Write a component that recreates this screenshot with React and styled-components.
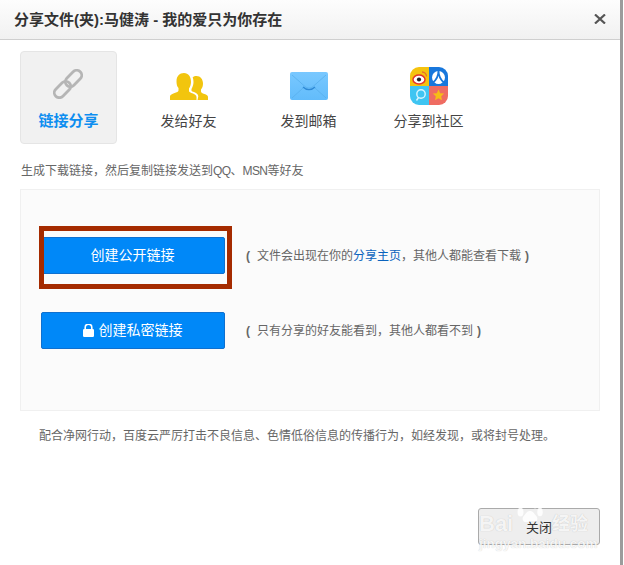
import React from "react";
import styled, { createGlobalStyle } from "styled-components";

const Global = createGlobalStyle`
  html, body { margin: 0; padding: 0; background: #fff; }
  body { font-family: "Liberation Sans", "Noto Sans CJK SC", sans-serif; }
`;

const Page = styled.div`
  position: relative;
  width: 624px;
  height: 565px;
  overflow: hidden;
  background: #fff;
`;
const Dialog = styled.div`
  box-sizing: border-box;
  width: 623px;
  height: 565px;
  border-right: 3px solid #9c9c9c;
  display: flex;
  flex-direction: column;
`;
const Header = styled.header`
  box-sizing: border-box;
  height: 40px;
  flex: none;
  display: flex;
  align-items: center;
  justify-content: space-between;
  padding: 0 14px;
  background: linear-gradient(#fdfdfd, #f1f1f1);
  border-bottom: 1px solid #cfcfcf;
`;
const Title = styled.h1`
  margin: 0;
  font-size: 15px;
  font-weight: 700;
  color: #333;
  line-height: 38px;
`;
const Close = styled.svg`
  width: 12px;
  height: 10px;
  margin-top: -1px;
`;
const Tabs = styled.nav`
  display: flex;
  gap: 23px;
  padding: 11px 0 0 20px;
`;
const Tab = styled.div`
  box-sizing: border-box;
  width: 97px;
  height: 93px;
  display: flex;
  flex-direction: column;
  align-items: center;
  padding-top: 15px;
  border: 1px solid ${(p) => (p.$active ? "#e5e5e5" : "transparent")};
  border-radius: 4px;
  background: ${(p) => (p.$active ? "#f1f1f1" : "transparent")};
`;
const IconSlot = styled.div`
  height: 38px;
  display: flex;
  align-items: center;
  justify-content: center;
`;
const TabLabel = styled.div`
  margin-top: 6px;
  font-size: ${(p) => (p.$active ? "15px" : "14px")};
  line-height: 20px;
  font-weight: ${(p) => (p.$active ? 700 : 400)};
  color: ${(p) => (p.$active ? "#0e8ef0" : "#444")};
  white-space: nowrap;
`;
const Desc = styled.p`
  margin: 18px 0 0 21px;
  font-size: 12px;
  line-height: 18px;
  color: #666;
`;
const Tight = styled.span`
  letter-spacing: -0.6px;
`;
const Panel = styled.section`
  box-sizing: border-box;
  width: 580px;
  height: 222px;
  margin: 9px 0 0 20px;
  padding: 47px 0 0 20px;
  background: #fbfbfb;
  border: 1px solid #f0f0f0;
  display: flex;
  flex-direction: column;
  gap: 38px;
`;
const Row = styled.div`
  display: flex;
  align-items: center;
  gap: 21px;
`;
const Button = styled.button`
  box-sizing: border-box;
  width: 184px;
  height: 37px;
  display: flex;
  align-items: center;
  justify-content: center;
  gap: 5px;
  padding: 0 1px 3px 0;
  background: #0088f8;
  border: 1px solid #0f70cf;
  border-radius: 2px;
  color: #fff;
  font: 14px "Liberation Sans", "Noto Sans CJK SC", sans-serif;
`;
const ButtonIcon = styled.svg`
  width: 11px;
  height: 13px;
  margin-top: 2px;
`;
const Hint = styled.div`
  display: flex;
  align-items: center;
  font-size: 12px;
  line-height: 18px;
  color: #666;
`;
const Paren = styled.span`
  width: ${(p) => (p.$end ? "8px" : "11px")};
  font-weight: 700;
  flex: none;
  text-align: ${(p) => (p.$end ? "right" : "left")};
`;
const Link = styled.a`
  color: #0a63bd;
`;
const Note = styled.p`
  margin: 16px 0 0 39px;
  font-size: 12px;
  line-height: 18px;
  color: #666;
`;
const Footer = styled.div`
  margin-top: auto;
  padding: 0 20px 20px 0;
  display: flex;
  justify-content: flex-end;
`;
const CloseButton = styled.button`
  box-sizing: border-box;
  width: 122px;
  height: 37px;
  padding: 0;
  background: #eee;
  border: 1px solid #aaa;
  border-radius: 3px;
  color: #333;
  font: 13px "Liberation Sans", "Noto Sans CJK SC", sans-serif;
`;
const Frame = styled.div`
  position: absolute;
  left: 39px;
  top: 226px;
  box-sizing: border-box;
  width: 193px;
  height: 63px;
  border: 5px solid #a52b00;
  pointer-events: none;
`;
const Watermark = styled.div`
  position: absolute;
  left: 478px;
  top: 497px;
  width: 115px;
  height: 54px;
  color: rgba(255, 255, 255, 0.85);
  text-shadow: 0 0 1px rgba(0, 0, 0, 0.22);
  pointer-events: none;
`;
const WmBai = styled.span`
  position: absolute;
  left: 1px;
  top: 14px;
  font-size: 22px;
  line-height: 26px;
  font-weight: 700;
`;
const WmJing = styled.span`
  position: absolute;
  left: 74px;
  top: 15px;
  font-size: 18px;
  line-height: 24px;
  font-weight: 700;
`;
const WmUrl = styled.span`
  position: absolute;
  left: 1px;
  top: 39px;
  font-size: 13.5px;
  line-height: 16px;
  font-weight: 700;
  white-space: nowrap;
`;
const WmPaw = styled.svg`
  position: absolute;
  left: 39px;
  top: 1px;
  width: 26px;
  height: 27px;
`;

const LinkIcon = () => (
  <svg width="30" height="30" viewBox="0 0 30 30" fill="none" stroke="#b5b5b5" strokeWidth="2.800" style={{ marginTop: -4, marginLeft: -2 }}>
    <rect x="11" y="4.500" width="19" height="10" rx="5" transform="rotate(-45 20.500 9.500)" />
    <rect x="0" y="15.500" width="19" height="10" rx="5" transform="rotate(-45 9.500 20.500)" />
  </svg>
);
const PeopleIcon = () => (
  <svg width="38" height="27" viewBox="0 0 38 27" fill="#f2c50e">
    <path d="M21 9c0 2.500-1 5-2 6.500v2.500c0 1 1.500 1.700 4 2.500 2 .8 3.500 2 3.500 3.500V27H0v-3.500c0-1.500 1.500-2.500 4-3.300 3-1 4.500-1.600 4.500-2.700v-2.500C7 13.500 6.500 11 6.500 8.500 6.500 3 9.500 0 14 0s7 3.500 7 9z" />
    <path d="M27.500 27h10.500v-3c0-1.500-1.500-2.300-3.500-3-2.500-.8-3.500-1.500-3.500-2.500v-2c1.300-1.500 2-3.500 2-6C33 6.500 30.500 3 26.500 3c-1.500 0-2.800.5-3.800 1.300.5 1.500.8 3 .8 4.700 0 2.700-1 5.300-2 7v1.800c0 .5 1 .9 3 1.500 2.200.8 3.800 2.200 3.800 4.200z" />
  </svg>
);
const MailIcon = () => (
  <svg width="38" height="28" viewBox="0 0 38 28" fill="none">
    <defs>
      <linearGradient id="mailBg" x1="0" y1="0" x2="0" y2="1">
        <stop offset="0" stopColor="#79c8ff" />
        <stop offset="1" stopColor="#62bcfb" />
      </linearGradient>
    </defs>
    <rect width="38" height="28" rx="2" fill="url(#mailBg)" />
    <path d="M2 3l13 11.500c2.500 2 5.500 2 8 0L36 3" stroke="#58aeec" strokeWidth="0.800" />
    <path d="M13 15c3.500 3.500 8.500 3.500 12 0" stroke="#2f8ad6" strokeWidth="1.400" />
    <path d="M2 26l11-10M36 26L25 16" stroke="#58aeec" strokeWidth="0.800" />
  </svg>
);
const CommunityIcon = () => (
  <svg width="38" height="38" viewBox="0 0 38 38">
    <defs>
      <clipPath id="tile"><rect width="38" height="38" rx="9" /></clipPath>
    </defs>
    <g clipPath="url(#tile)">
      <rect width="19" height="19" fill="#f5c30e" />
      <rect x="19" width="19" height="19" fill="#1877dc" />
      <rect y="19" width="19" height="19" fill="#3fc5f2" />
      <rect x="19" y="19" width="19" height="19" fill="#ef6c62" />
    </g>
    <ellipse cx="9" cy="12.500" rx="6" ry="4.500" fill="#fff" stroke="#e4352b" strokeWidth="1.500" />
    <circle cx="9" cy="12.500" r="2.100" fill="#222" />
    <path d="M12 5a4.500 4.500 0 0 1 4.500 4.500" stroke="#e9702a" strokeWidth="1.300" fill="none" />
    <circle cx="28.500" cy="10.500" r="6.500" fill="#fff" />
    <path d="M28.500 3.500C28.500 9 26.500 13 22.500 16M28.500 3.500C28.500 9 30.500 13 34.500 16" stroke="#1877dc" strokeWidth="1.800" fill="none" />
    <path d="M28.500 13l-2.400 3.500h4.800z" fill="#fff" />
    <circle cx="11" cy="27" r="4.200" fill="none" stroke="#d8f5ff" strokeWidth="1.400" />
    <path d="M8.500 30.500l-2 3" stroke="#d8f5ff" strokeWidth="1.400" />
    <path d="M28.500 22.500l1.700 3.700 4 .4-3 2.700.8 4-3.500-2-3.500 2 .8-4-3-2.700 4-.4z" fill="#f6bd16" />
  </svg>
);
const LockIcon = () => (
  <ButtonIcon viewBox="0 0 11 13" fill="#fff">
    <rect y="5" width="11" height="8" rx="1.200" />
    <path d="M2.200 5.500V3.500a3.300 3.300 0 0 1 6.600 0v2" fill="none" stroke="#fff" strokeWidth="1.600" />
  </ButtonIcon>
);

const tabs = [
  { label: "链接分享", icon: <LinkIcon />, active: true },
  { label: "发给好友", icon: <PeopleIcon /> },
  { label: "发到邮箱", icon: <MailIcon /> },
  { label: "分享到社区", icon: <CommunityIcon /> },
];

export default function App() {
  return (
    <Page>
      <Global />
      <Dialog>
        <Header>
          <Title>分享文件(夹):马健涛 - 我的爱只为你存在</Title>
          <Close viewBox="0 0 12 10">
            <path d="M1 0.500l10 9M11 0.500l-10 9" stroke="#555" strokeWidth="2.200" />
          </Close>
        </Header>
        <Tabs>
          {tabs.map((t) => (
            <Tab key={t.label} $active={t.active}>
              <IconSlot>{t.icon}</IconSlot>
              <TabLabel $active={t.active}>{t.label}</TabLabel>
            </Tab>
          ))}
        </Tabs>
        <Desc>生成下载链接，然后复制链接发送到<Tight>QQ</Tight>、<Tight>MSN</Tight>等好友</Desc>
        <Panel>
          <Row>
            <Button>创建公开链接</Button>
            <Hint>
              <Paren>(</Paren>文件会出现在你的<Link>分享主页</Link>，其他人都能查看下载<Paren $end>)</Paren>
            </Hint>
          </Row>
          <Row>
            <Button><LockIcon />创建私密链接</Button>
            <Hint>
              <Paren>(</Paren>只有分享的好友能看到，其他人都看不到<Paren $end>)</Paren>
            </Hint>
          </Row>
        </Panel>
        <Note>配合净网行动，百度云严厉打击不良信息、色情低俗信息的传播行为，如经发现，或将封号处理。</Note>
        <Footer>
          <CloseButton>关闭</CloseButton>
        </Footer>
      </Dialog>
      <Frame />
      <Watermark>
        <WmPaw viewBox="0 0 26 27" fill="rgba(255,255,255,0.85)">
          <ellipse cx="3.500" cy="14" rx="3" ry="4.500" />
          <ellipse cx="9.500" cy="5" rx="3.200" ry="5" />
          <ellipse cx="18" cy="5.500" rx="3.200" ry="5" />
          <ellipse cx="23" cy="14" rx="2.800" ry="4.200" />
          <path d="M13 13c-3 0-4 2.500-5.500 4s-2.500 3.500-1.500 5.500 3 2 7 1 6 1 7-1 0-4-1.500-5.500-2.500-4-5.500-4z" />
        </WmPaw>
        <WmBai>Bai</WmBai>
        <WmJing>经验</WmJing>
        <WmUrl>jingyan.baidu.com</WmUrl>
      </Watermark>
    </Page>
  );
}
